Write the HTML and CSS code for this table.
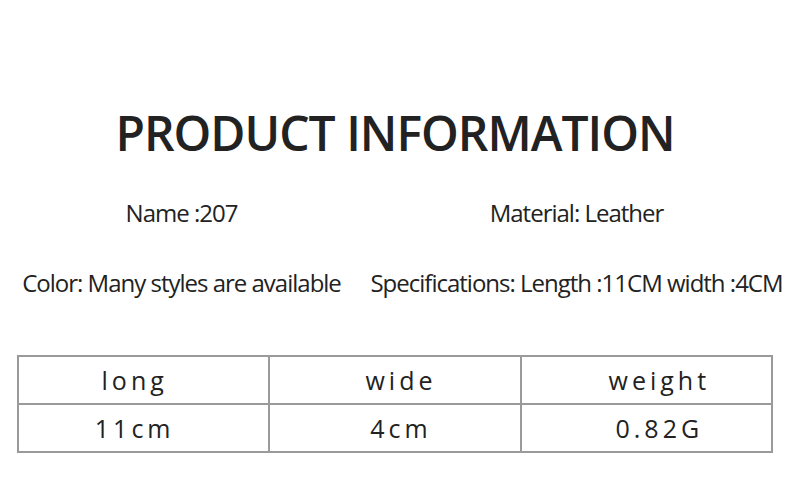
FILE: index.html
```html
<!DOCTYPE html>
<html>
<head>
<meta charset="utf-8">
<link rel="stylesheet" href="styles.css">
</head>
<body>
<main class="page">
  <h1 class="title">PRODUCT INFORMATION</h1>
  <section class="info">
    <p class="info-item">Name :207</p>
    <p class="info-item">Material: Leather</p>
    <p class="info-item">Color: Many styles are available</p>
    <p class="info-item">Specifications: Length :11CM width :4CM</p>
  </section>
  <table class="spec">
    <tr><td class="c1">long</td><td class="c2">wide</td><td class="c3">weight</td></tr>
    <tr><td class="c1">11cm</td><td class="c2">4cm</td><td class="c3">0.82G</td></tr>
  </table>
</main>
</body>
</html>
```
FILE: styles.css
```css
html, body {
  margin: 0;
  padding: 0;
  background: #ffffff;
}
.page {
  width: 790px;
  height: 495px;
  padding-top: 100px;
  box-sizing: border-box;
  color: #222222;
  font-family: "Open Sans", "DejaVu Sans", sans-serif;
}
.title {
  margin: 0;
  text-align: center;
  font-size: 48px;
  font-weight: 600;
  line-height: 66px;
  letter-spacing: -1px;
}
.info {
  margin-top: 32px;
  display: grid;
  grid-template-columns: 363px 1fr;
  row-gap: 40px;
}
.info-item {
  margin: 0;
  text-align: center;
  font-size: 24px;
  line-height: 30px;
  letter-spacing: -1px;
}
.spec {
  margin: 57px 0 0 17px;
  border-collapse: collapse;
  width: 756px;
  table-layout: fixed;
}
.spec td {
  border: 2px solid #9a9a9a;
  height: 46px;
  padding: 0;
  text-align: center;
  font-size: 25px;
  letter-spacing: 4px;
  color: #222;
}
.spec .c1 { padding-right: 18px; }
.spec .c2 { padding-left: 12px; }
.spec .c3 { padding-left: 26px; }
```
